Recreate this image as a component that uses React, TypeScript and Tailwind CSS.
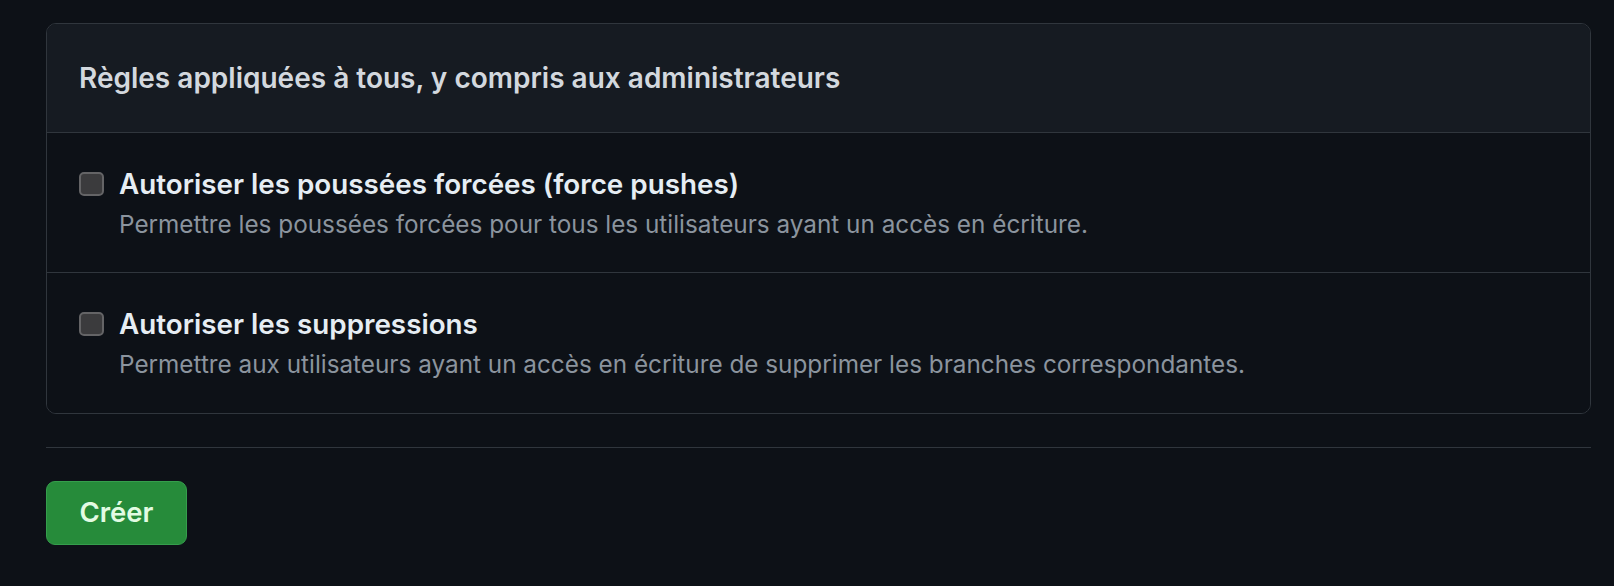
import React from 'react';

interface Rule {
  id: string;
  title: string;
  description: string;
}

const RULES: Rule[] = [
  {
    id: 'force-push',
    title: 'Autoriser les poussées forcées (force pushes)',
    description: 'Permettre les poussées forcées pour tous les utilisateurs ayant un accès en écriture.',
  },
  {
    id: 'deletions',
    title: 'Autoriser les suppressions',
    description:
      'Permettre aux utilisateurs ayant un accès en écriture de supprimer les branches correspondantes.',
  },
];

const App: React.FC = () => {
  return (
    <div
      className="w-full min-h-[586px] bg-[#0d1117] pl-[46px] pr-[23px] pt-[23px] pb-[41px]"
      style={{ fontFamily: 'Inter, "Noto Sans", "Liberation Sans", sans-serif' }}
    >
      {/* Rules card */}
      <div className="rounded-[10px] border border-[#30363d] overflow-hidden">
        <div className="h-[109px] flex items-center px-8 bg-[#161b22] border-b border-[#30363d]">
          <h3 className="text-[28px] leading-[32px] font-semibold text-[#d3d8de]">
            Règles appliquées à tous, y compris aux administrateurs
          </h3>
        </div>

        {RULES.map((rule, i) => (
          <label
            key={rule.id}
            className={`h-[140px] flex items-start gap-[15px] px-8 pt-[35px] bg-[#0d1117] ${
              i < RULES.length - 1 ? 'border-b border-[#30363d]' : ''
            }`}
          >
            <span className="mt-[4px] w-[25px] h-[24px] flex-shrink-0 rounded-[5px] bg-[#3b3b3d] border-2 border-[#646466]" />
            <div className="flex flex-col">
              <span className="text-[27.8px] leading-[32px] font-semibold text-[#e6edf3]">{rule.title}</span>
              <span className="mt-[10px] text-[24.3px] leading-[28px] text-[#8b949e]">{rule.description}</span>
            </div>
          </label>
        ))}
      </div>

      {/* Divider */}
      <div className="mt-[33px] h-px bg-[#30363d]" />

      {/* Submit */}
      <button
        type="button"
        className="mt-[33px] w-[141px] h-[64px] rounded-[9px] bg-[#268b3a] border border-[#359e4c] text-[27.5px] font-semibold text-[#e3fbe3]"
      >
        Créer
      </button>
    </div>
  );
};

export default App;
